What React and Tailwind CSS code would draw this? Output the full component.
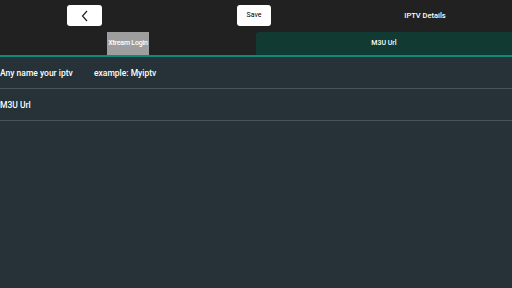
import React from "react";

export default function App() {
  return (
    <div
      className="w-[512px] h-[288px] bg-[#263238] text-white overflow-hidden"
      style={{ fontFamily: "Roboto, 'Noto Sans', sans-serif" }}
    >
      {/* top bar */}
      <div className="bg-[#212121]">
        <div className="h-[32px] flex items-start pt-[5px]">
          <button className="ml-[67px] w-[35px] h-[21px] bg-white rounded-[3px] flex items-center justify-center">
            <svg width="10" height="12" viewBox="0 0 10 12" fill="none">
              <path d="M7 1 L2.5 6 L7 11" stroke="#222" strokeWidth="1.2" />
            </svg>
          </button>
          <button className="ml-[135px] w-[34px] h-[21px] bg-white rounded-[3px] text-black text-[7px] flex items-center justify-center">
            Save
          </button>
          <div className="ml-[120px] w-[68px] h-[21px] flex items-center justify-center text-[7.5px] font-medium">
            IPTV Details
          </div>
        </div>
        <div className="flex h-[23px]">
          <div className="w-[256px] flex justify-center">
            <div className="w-[42px] h-full bg-[#9e9e9e] flex items-center justify-center text-[7px] font-medium tracking-[-0.2px] whitespace-nowrap">
              Xtream Login
            </div>
          </div>
          <div className="w-[256px] bg-[#113a32] rounded-tl-[3px] flex items-center justify-center text-[7px] font-medium">
            M3U Url
          </div>
        </div>
        <div className="h-[2px] bg-[#0f8a78]"></div>
      </div>

      {/* form rows */}
      <div className="h-[31px] flex items-center text-[8.5px] font-medium pt-px">
        <span className="w-[94px]">Any name your iptv</span>
        <span>example: Myiptv</span>
      </div>
      <div className="h-px bg-[#4c5258]"></div>
      <div className="h-[31px] flex items-center text-[8.5px] font-medium pt-px">
        <span>M3U Url</span>
      </div>
      <div className="h-px bg-[#4c5258]"></div>
    </div>
  );
}
